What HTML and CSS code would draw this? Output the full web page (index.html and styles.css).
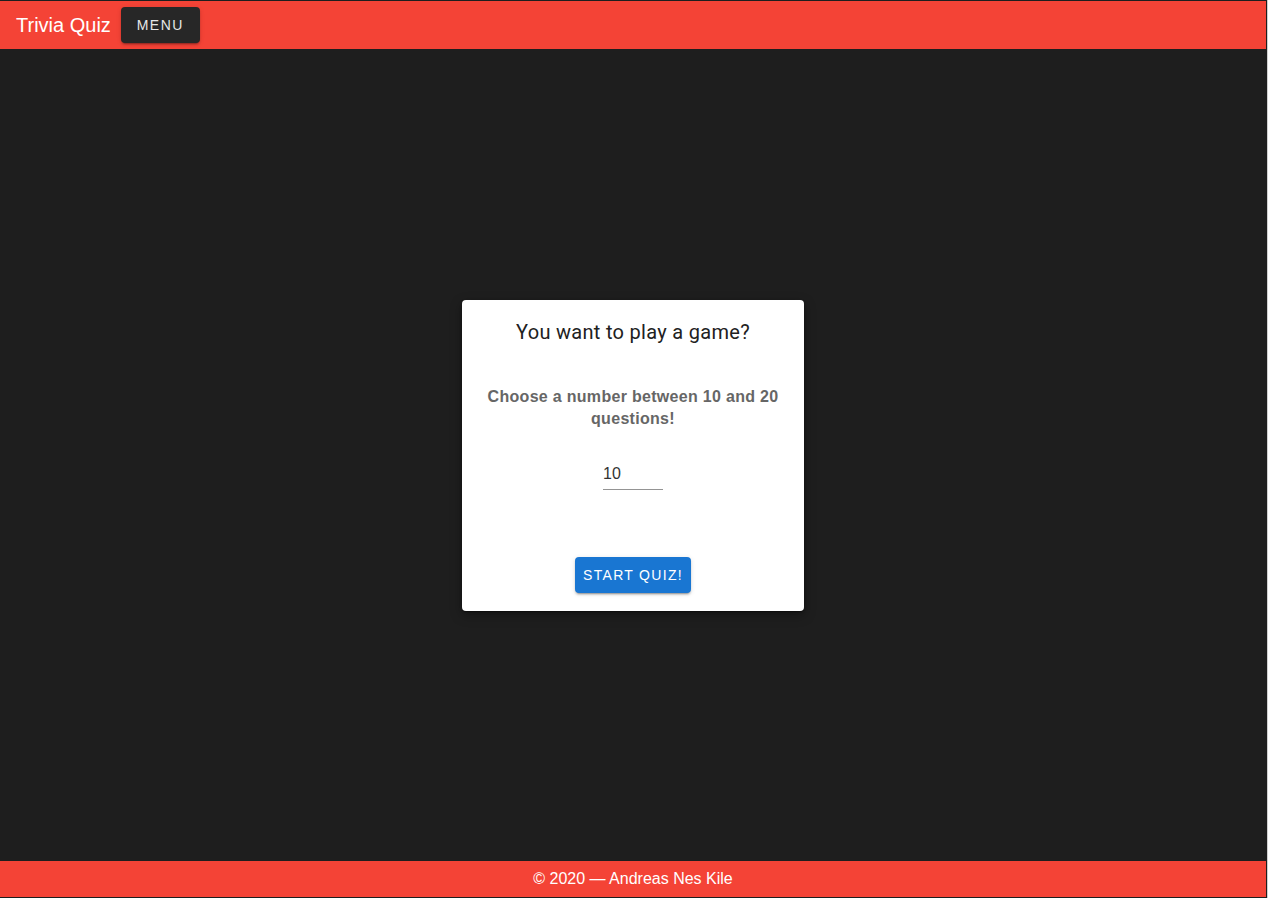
FILE: index.html
```html
<!DOCTYPE html>
<html lang="en">
<head>
<meta charset="utf-8">
<title>Trivia Quiz</title>
<link rel="stylesheet" href="styles.css">
</head>
<body>
<div class="app">
  <header class="topbar">
    <span class="brand">Trivia Quiz</span>
    <button class="menu-btn">MENU</button>
  </header>
  <main class="main">
    <section class="card">
      <h2 class="card-title">You want to play a game?</h2>
      <p class="card-text">Choose a number between 10 and 20 questions!</p>
      <input class="count-input" type="number" value="10" min="10" max="20">
      <button class="start-btn">START QUIZ!</button>
    </section>
  </main>
  <footer class="footer">© 2020 — Andreas Nes Kile</footer>
</div>
</body>
</html>
```
FILE: styles.css
```css
html, body {
  margin: 0;
  padding: 0;
  height: 100%;
}
body {
  background: #1e1e1e;
  font-family: "Liberation Sans", Arial, sans-serif;
  box-sizing: border-box;
  border-right: 1px solid #cfcfcf;
}
.app {
  display: flex;
  flex-direction: column;
  height: 896px;
  margin-top: 1px;
  margin-right: 1px;
}
.topbar {
  height: 48px;
  background: #f44336;
  display: flex;
  align-items: center;
  padding: 0 16px;
  gap: 10px;
  flex-shrink: 0;
}
.brand {
  color: #fff;
  font-size: 20px;
  line-height: 24px;
}
.menu-btn {
  height: 36px;
  width: 79px;
  border: none;
  border-radius: 4px;
  background: #272727;
  color: #e6e6e6;
  font-family: "Liberation Sans", Arial, sans-serif;
  font-size: 14px;
  letter-spacing: 1.5px;
  padding: 0;
  box-shadow: 0 3px 1px -2px rgba(0,0,0,0.2), 0 2px 2px 0 rgba(0,0,0,0.14), 0 1px 5px 0 rgba(0,0,0,0.12);
}
.main {
  flex: 1;
  display: flex;
  align-items: center;
  justify-content: center;
}
.card {
  width: 342px;
  box-sizing: border-box;
  background: #fff;
  border-radius: 4px;
  padding: 16px 16px 18px;
  display: flex;
  flex-direction: column;
  align-items: center;
  box-shadow: 0 2px 1px -1px rgba(0,0,0,0.2), 0 1px 1px 0 rgba(0,0,0,0.14), 0 1px 3px 0 rgba(0,0,0,0.12), 0 4px 12px rgba(0,0,0,0.35);
}
.card-title {
  margin: 0;
  font-family: Roboto, "Liberation Sans", sans-serif;
  font-weight: 400;
  font-size: 20px;
  line-height: 32px;
  letter-spacing: 0.3px;
  color: #212121;
  text-align: center;
}
.card-text {
  margin: 38px 0 0;
  font-family: "Liberation Sans", Arial, sans-serif;
  font-weight: 700;
  font-size: 16px;
  line-height: 22px;
  letter-spacing: 0.3px;
  color: #666;
  text-align: center;
}
.count-input {
  margin-top: 31px;
  width: 60px;
  box-sizing: border-box;
  border: none;
  border-bottom: 1px solid #949494;
  outline: none;
  padding: 3px 0 6px;
  font-family: "Liberation Sans", Arial, sans-serif;
  font-size: 16px;
  line-height: 19px;
  color: #333;
  background: transparent;
  -moz-appearance: textfield;
}
.count-input::-webkit-outer-spin-button,
.count-input::-webkit-inner-spin-button {
  -webkit-appearance: none;
  margin: 0;
}
.start-btn {
  margin-top: 67px;
  height: 36px;
  width: 116px;
  border: none;
  border-radius: 4px;
  background: #1976d2;
  color: #fff;
  font-family: "Liberation Sans", Arial, sans-serif;
  font-size: 14px;
  letter-spacing: 1.3px;
  padding: 0;
  box-shadow: 0 3px 1px -2px rgba(0,0,0,0.2), 0 2px 2px 0 rgba(0,0,0,0.14), 0 1px 5px 0 rgba(0,0,0,0.12);
}
.footer {
  height: 36px;
  flex-shrink: 0;
  background: #f44336;
  color: #fff;
  font-size: 16px;
  line-height: 36px;
  text-align: center;
}
```
